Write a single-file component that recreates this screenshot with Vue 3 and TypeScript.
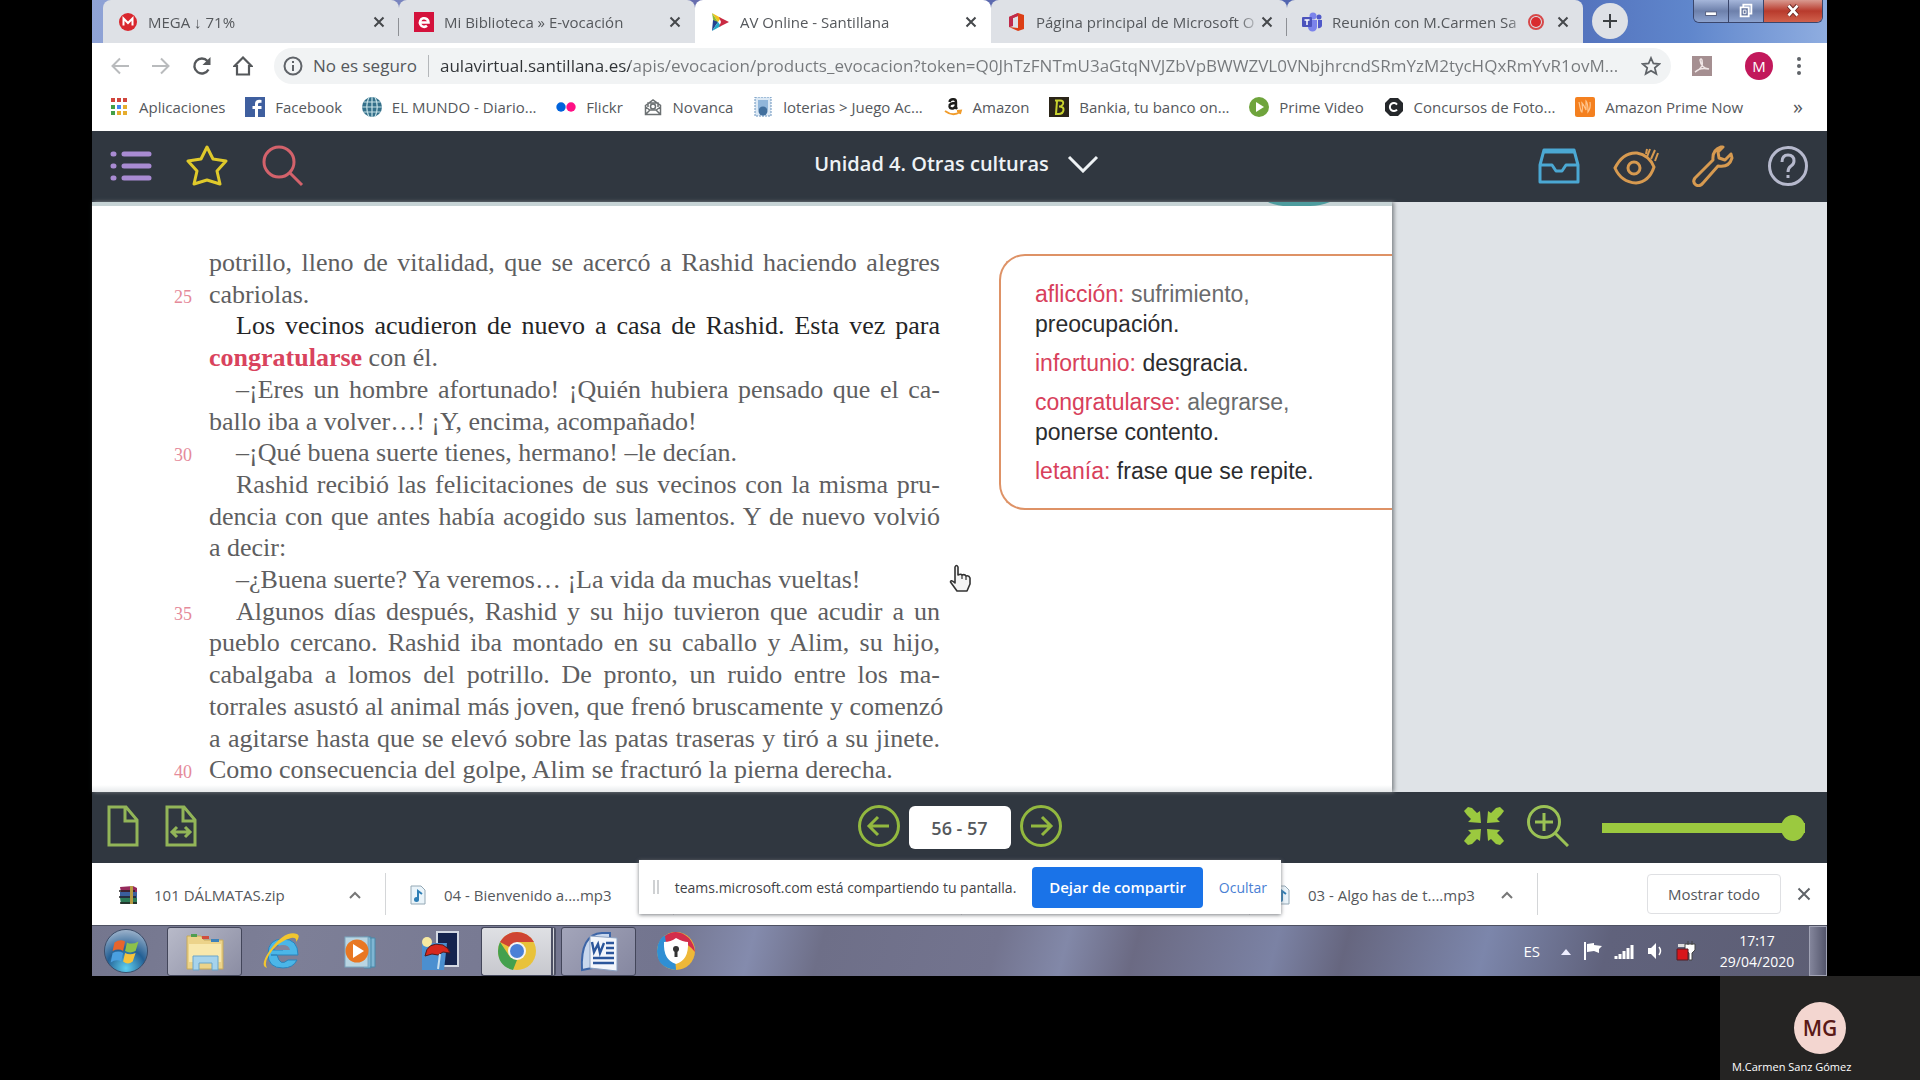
<script setup lang="ts">
import { ref } from 'vue'

interface IconItem {
  label: string
  icon: string
}
interface Tab extends IconItem {
  active?: boolean
  recording?: boolean
  divider?: boolean
}
interface Line {
  text: string
  keyword?: string
  num?: number
  indent?: boolean
  full?: boolean
  strong?: boolean
}

const tabs: Tab[] = [
  { label: 'MEGA ↓ 71%', divider: true, icon: '<circle cx="10" cy="10" r="9" fill="#d9272e"/><path d="M5.500 13.500v-7l4.500 4.500 4.500-4.500v7" fill="none" stroke="#fff" stroke-width="2"/>' },
  { label: 'Mi Biblioteca » E-vocación', icon: '<rect width="20" height="20" fill="#d4123c"/><path d="M6 10.500h8.500a4.300 4.300 0 1 0-1.500 3.300" fill="none" stroke="#fff" stroke-width="2.600"/>' },
  { label: 'AV Online - Santillana', active: true, icon: '<path d="M2 1l9 5-3 4z" fill="#f2c21a"/><path d="M2 1l6 9-4 3z" fill="#8dbb3a"/><path d="M2 19l6-9-5-2z" fill="#23408f"/><path d="M2 19l9-5-3-4z" fill="#25a7c9"/><path d="M9 5l10 5-10 5 2-5z" fill="#c92a43"/>' },
  { label: 'Página principal de Microsoft O', divider: true, icon: '<path d="M3 5l9-4 6 2v14l-6 2-9-4 9 1V4L7 6v8l-4 1z" fill="#dc3e15"/><path d="M3 5l9-4v3L7 6v8l-4 1z" fill="#c02b4c"/>' },
  { label: 'Reunión con M.Carmen Sa', recording: true, icon: '<circle cx="11" cy="4" r="3.500" fill="#7b83eb"/><circle cx="17" cy="5" r="2.500" fill="#5059c9"/><path d="M6 8h9v7a4.500 4.500 0 0 1-9 0z" fill="#7b83eb"/><path d="M16 8h4v5a3 3 0 0 1-4 3z" fill="#5059c9"/><rect y="5" width="10" height="10" rx="1" fill="#4b53bc"/><path d="M2.500 8h5M5 8v5" stroke="#fff" stroke-width="1.500"/>' },
]

const bookmarks: IconItem[] = [
  { label: 'Aplicaciones', icon: '<g fill="#d0453c"><path d="M2 1h4v4H2zM8 1h4v4H8zM14 1h4v4h-4z"/></g><path d="M2 8h4v4H2zM2 14h4v4H2z" fill="#43a047"/><path d="M8 8h4v4H8z" fill="#4285f4"/><path d="M14 8h4v4h-4zM8 14h4v4H8zM14 14h4v4h-4z" fill="#e6ad2e"/>' },
  { label: 'Facebook', icon: '<rect width="20" height="20" fill="#3f5f9f"/><path d="M13 20v-8h3.500V9H13V7q0-1.500 3.500-1.200V3Q10 2 10 7v2H7.500v3H10v8z" fill="#fff"/>' },
  { label: 'EL MUNDO - Diario...', icon: '<circle cx="10" cy="10" r="10" fill="#34708a"/><path d="M0 10h20M1.500 5h17M1.500 15h17M10 0v20M7 0Q2.500 10 7 20M13 0q4.500 10 0 20" fill="none" stroke="#c4e0e6" stroke-width="1.200"/>' },
  { label: 'Flickr', icon: '<circle cx="5" cy="10" r="4.700" fill="#0063dc"/><circle cx="15" cy="10" r="4.700" fill="#ff0f84"/>' },
  { label: 'Novanca', icon: '<g fill="none" stroke="#6b7072" stroke-width="1.500"><path d="M2.500 8.500L10 3l7.500 5.500v9h-15zM5 10V6h10v4M2.500 10l5 3.500M17.500 10l-5 3.500M3 17l4-4h6l4 4"/><circle cx="10" cy="9.500" r="2.500"/></g>' },
  { label: 'loterias > Juego Ac...', icon: '<path d="M2 0h16v19H2z" fill="#dbe8f4" stroke="#6b93bd" stroke-dasharray="2 1"/><path d="M5 3h10v9l-5 8-5-8z" fill="#91b6da"/><circle cx="10" cy="14" r="4.500" fill="#416f9d"/>' },
  { label: 'Amazon', icon: '<path d="M6.500 5Q7 2 10.500 2.300 13 2.500 13 5v5.500l1 1.500M13 6Q6 6 6.500 9.500 7 12 10 11.500 13 11 13 7" fill="none" stroke="#1d1d1b" stroke-width="2.400"/><path d="M2 14q8 6 15 1M14 14l4-.5-1 3.500" fill="none" stroke="#f19c2b" stroke-width="1.800"/>' },
  { label: 'Bankia, tu banco on...', icon: '<rect width="20" height="20" fill="#2b2519"/><path d="M6 3.500h5q4 0 3 3.500-1 2.500-4 2.500 5 0 4.500 3.500-.5 4-5 4H7l1-13" fill="none" stroke="#c9d32e" stroke-width="2"/>' },
  { label: 'Prime Video', icon: '<circle cx="10" cy="10" r="10" fill="#6fa43c"/><path d="M7 5l8 5-8 5z" fill="#fff"/>' },
  { label: 'Concursos de Foto...', icon: '<path d="M6 1h8l5 5v8l-5 5H6l-5-5V6z" fill="#25282b"/><path d="M13 7.500a4 4 0 1 0 0 5" fill="none" stroke="#fff" stroke-width="2"/>' },
  { label: 'Amazon Prime Now', icon: '<rect width="20" height="20" rx="2" fill="#f4801f"/><path d="M4 5q2 11 3 10 1-4 0-9 2 2 4 7V4q2 2 2 11 3-4 2-10" fill="none" stroke="#ffc48c" stroke-width="1.200"/>' },
]

const lines: Line[] = [
  { text: 'potrillo, lleno de vitalidad, que se acercó a Rashid haciendo alegres', full: true },
  { text: 'cabriolas.', num: 25 },
  { text: 'Los vecinos acudieron de nuevo a casa de Rashid. Esta vez para', indent: true, full: true, strong: true },
  { keyword: 'congratularse', text: ' con él.' },
  { text: '–¡Eres un hombre afortunado! ¡Quién hubiera pensado que el ca-', indent: true, full: true },
  { text: 'ballo iba a volver…! ¡Y, encima, acompañado!' },
  { text: '–¡Qué buena suerte tienes, hermano! –le decían.', num: 30, indent: true },
  { text: 'Rashid recibió las felicitaciones de sus vecinos con la misma pru-', indent: true, full: true },
  { text: 'dencia con que antes había acogido sus lamentos. Y de nuevo volvió', full: true },
  { text: 'a decir:' },
  { text: '–¿Buena suerte? Ya veremos… ¡La vida da muchas vueltas!', indent: true },
  { text: 'Algunos días después, Rashid y su hijo tuvieron que acudir a un', num: 35, indent: true, full: true },
  { text: 'pueblo cercano. Rashid iba montado en su caballo y Alim, su hijo,', full: true },
  { text: 'cabalgaba a lomos del potrillo. De pronto, un ruido entre los ma-', full: true },
  { text: 'torrales asustó al animal más joven, que frenó bruscamente y comenzó', full: true },
  { text: 'a agitarse hasta que se elevó sobre las patas traseras y tiró a su jinete.', full: true },
  { text: 'Como consecuencia del golpe, Alim se fracturó la pierna derecha.', num: 40 },
]

const glossary = [
  { term: 'aflicción:', first: 'sufrimiento,', rest: 'preocupación.' },
  { term: 'infortunio:', first: '', rest: 'desgracia.' },
  { term: 'congratularse:', first: 'alegrarse,', rest: 'ponerse contento.' },
  { term: 'letanía:', first: '', rest: 'frase que se repite.' },
]

const url = ref('aulavirtual.santillana.es/apis/evocacion/products_evocacion?token=Q0JhTzFNTmU3aGtqNVJZbVpBWWZVL0VNbjhrcndSRmYzM2tycHQxRmYvR1ovM...')
const pages = ref('56 - 57')
const zoomLevel = ref(100)
</script>

<template>
  <div class="stage">
    <main class="screen">
      <div class="tabstrip">
        <div v-for="t in tabs" :key="t.label" class="tab" :class="{ active: t.active, divider: t.divider }">
          <svg class="ico20" viewBox="0 0 20 20" v-html="t.icon"></svg>
          <span class="tab-title">{{ t.label }}</span>
          <svg v-if="t.recording" class="rec" viewBox="0 0 18 18"><circle cx="9" cy="9" r="7" fill="none" stroke="#d7494a" stroke-width="2" /><circle cx="9" cy="9" r="5" fill="#d92b2f" /></svg>
          <button class="plain" aria-label="Cerrar pestaña"><svg class="ico12" viewBox="0 0 12 12"><path d="M1.500 1.500l9 9M10.500 1.500l-9 9" stroke="#45484b" stroke-width="2" /></svg></button>
        </div>
        <button class="newtab" aria-label="Nueva pestaña"><svg viewBox="0 0 16 16"><path d="M8 1v14M1 8h14" stroke="#3c4043" stroke-width="2" /></svg></button>
        <div class="winbtns">
          <button class="win" aria-label="Minimizar"><svg viewBox="0 0 20 20"><rect x="4" y="11" width="12" height="4" fill="#fff" stroke="#50597a" /></svg></button>
          <button class="win" aria-label="Restaurar"><svg viewBox="0 0 20 20"><path d="M7 3h9v10h-9z" fill="#8a9cc4" stroke="#fff" stroke-width="2" /><path d="M4 6h9v10H4z" fill="#66769e" stroke="#fff" stroke-width="2" /><path d="M7 9h3v4H7z" fill="none" stroke="#fff" /></svg></button>
          <button class="win close" aria-label="Cerrar"><svg viewBox="0 0 20 20"><path d="M5 4l10 11M15 4L5 15" stroke="#6b2a26" stroke-width="5" /><path d="M5 4l10 11M15 4L5 15" stroke="#fff" stroke-width="3" /></svg></button>
        </div>
      </div>

      <div class="toolbar">
        <button class="plain" aria-label="Atrás"><svg class="ico20" viewBox="0 0 20 20"><path d="M19 10H3M10 2.500L2.500 10l7.500 7.500" fill="none" stroke="#b9bbbd" stroke-width="2" /></svg></button>
        <button class="plain" aria-label="Adelante"><svg class="ico20" viewBox="0 0 20 20"><path d="M1 10h16M10 2.500l7.500 7.500-7.500 7.500" fill="none" stroke="#b9bbbd" stroke-width="2" /></svg></button>
        <button class="plain" aria-label="Recargar"><svg class="ico20" viewBox="0 0 20 20"><path d="M16.500 13.500A7.500 7.500 0 1 1 15.500 5" fill="none" stroke="#55585b" stroke-width="2.400" /><path d="M18.500 1v8h-8z" fill="#55585b" /></svg></button>
        <button class="plain" aria-label="Inicio"><svg class="ico20" viewBox="0 0 20 20"><path d="M10 1.500L1.500 10H4v8.500h12V10h2.500z" fill="none" stroke="#55585b" stroke-width="2.200" /></svg></button>
        <div class="omnibox">
          <svg class="ico20" viewBox="0 0 20 20"><circle cx="10" cy="10" r="8.500" fill="none" stroke="#5f6368" stroke-width="2" /><path d="M10 9v6M10 5v2" stroke="#5f6368" stroke-width="2" /></svg>
          <span class="insecure">No es seguro</span>
          <input v-model="url" class="url" type="text" aria-label="Dirección" spellcheck="false" />
          <button class="plain" aria-label="Añadir a marcadores"><svg class="ico20" viewBox="0 0 20 20"><path d="M10 2l2.400 5.500 6 .5-4.600 3.900 1.500 5.900L10 14.700l-5.300 3.100 1.500-5.900L1.600 8l6-.5z" fill="none" stroke="#5f6368" stroke-width="1.800" /></svg></button>
        </div>
        <svg class="ico20" viewBox="0 0 20 20"><rect width="20" height="20" fill="#a58f91" /><path d="M3 16Q12 12 10 4q-1-2-2 0 1 8 9 9M3 16q5-5 14-3" fill="none" stroke="#f0e6e6" stroke-width="1.500" /></svg>
        <span class="avatar">M</span>
        <button class="plain" aria-label="Menú"><svg class="dots" viewBox="0 0 6 20"><g fill="#5f6368"><circle cx="3" cy="3" r="2" /><circle cx="3" cy="10" r="2" /><circle cx="3" cy="17" r="2" /></g></svg></button>
      </div>

      <nav class="bookmarks">
        <a v-for="b in bookmarks" :key="b.label" href="#"><svg class="ico20" viewBox="0 0 20 20" v-html="b.icon"></svg>{{ b.label }}</a>
        <button class="plain more" aria-label="Más marcadores">»</button>
      </nav>

      <header class="book-head">
        <div class="group left">
          <button class="plain" aria-label="Índice"><svg class="ico42" viewBox="0 0 42 42"><g stroke="#a98bd3" stroke-width="5" stroke-linecap="round"><path d="M14 9h25M14 21h25M14 33h25M3 9h1M3 21h1M3 33h1" /></g></svg></button>
          <button class="plain" aria-label="Favoritos"><svg class="ico42" viewBox="0 0 42 42"><path d="M21 2l6 12 13 2-9 10 3 13-13-4-13 4 3-13L2 16l13-2z" fill="none" stroke="#dfc92b" stroke-width="3" stroke-linejoin="round" /></svg></button>
          <button class="plain" aria-label="Buscar"><svg class="ico42" viewBox="0 0 42 42"><circle cx="17" cy="17" r="15" fill="none" stroke="#d3626b" stroke-width="3" /><path d="M28 28l12 12" stroke="#d3626b" stroke-width="3" /></svg></button>
        </div>
        <button class="plain unit">Unidad 4. Otras culturas<svg viewBox="0 0 32 18"><path d="M2 2l14 14L30 2" fill="none" stroke="#eef2f5" stroke-width="3" /></svg></button>
        <div class="group right">
          <button class="plain" aria-label="Recursos"><svg class="ico42" viewBox="0 0 42 42"><g fill="none" stroke="#4ba8d3" stroke-width="3" stroke-linejoin="round"><path d="M2 20L6 5h30l4 15v17H2zM2 20h12l4 6h6l4-6h12" /><path d="M5 7h32" /></g></svg></button>
          <button class="plain" aria-label="Ver"><svg class="ico46" viewBox="0 0 46 42"><g fill="none" stroke="#d79a50" stroke-width="3"><path d="M2 23Q10 7 24 8q12 2 17 14-5 15-18 16Q8 37 2 23z" /><circle cx="21" cy="23" r="6" /><path d="M34 12l3-8M38 14l4-9M42 16l3-8M33 9l1-5" stroke-width="2" /></g></svg></button>
          <button class="plain" aria-label="Herramientas"><svg class="ico42" viewBox="0 0 42 42"><path d="M29 2q-9 3-8 13L3 33q-3 4 1 7 4 2 7-2l15-17q11 2 14-8l-1-4-6 6-6-2-1-6 5-5z" fill="none" stroke="#d79a50" stroke-width="3" stroke-linejoin="round" /></svg></button>
          <button class="plain" aria-label="Ayuda"><svg class="ico42" viewBox="0 0 42 42"><circle cx="21" cy="21" r="18.500" fill="none" stroke="#b6b9cd" stroke-width="3" /><path d="M15 17q0-7 6-7t6 6q0 3-3 5-3 2-3 6M21 30v3" fill="none" stroke="#b6b9cd" stroke-width="3" /></svg></button>
        </div>
      </header>

      <section class="viewer">
        <div class="page">
          <svg class="teal" viewBox="0 0 62 4" preserveAspectRatio="none"><path d="M0 0h62Q52 4 42 4H20Q8 4 0 0z" fill="#4d9c9e" /></svg>
          <article class="story">
            <div v-for="(l, i) in lines" :key="i" class="row">
              <span class="num">{{ l.num }}</span>
              <p :class="{ indent: l.indent, full: l.full, strong: l.strong }"><b v-if="l.keyword">{{ l.keyword }}</b>{{ l.text }}</p>
            </div>
          </article>
          <aside class="glossary">
            <p v-for="g in glossary" :key="g.term">
              <span class="term">{{ g.term }}</span>&nbsp;<template v-if="g.first"><span class="soft">{{ g.first }}</span><br /></template>{{ g.rest }}
            </p>
          </aside>
        </div>
        <svg class="cursor" viewBox="0 0 22 28"><path d="M6 16V3q1.500-3 3 0v8q3-1.500 4 0 3-1 4 1 3-1 4 2v6l-3 7H8L1.500 18q0-3 4.500 1z" fill="#f4f4f4" stroke="#333" stroke-width="1.600" stroke-linejoin="round" /><path d="M13 11v4M17 12v4" stroke="#333" stroke-width="1.200" /></svg>
      </section>

      <footer class="book-foot">
        <div class="group files">
          <button class="plain" aria-label="Una página"><svg class="file" viewBox="0 0 32 42"><path d="M2 2h17l11 13v25H2zM18 2v14h12" fill="none" stroke="#92b558" stroke-width="3" /></svg></button>
          <button class="plain" aria-label="Ajustar al ancho"><svg class="file" viewBox="0 0 32 42"><path d="M2 2h17l11 13v25H2zM18 2v14h12M8 27h16M12 22l-5 5 5 5M20 22l5 5-5 5" fill="none" stroke="#92b558" stroke-width="3" /></svg></button>
        </div>
        <div class="group pager">
          <button class="plain" aria-label="Anterior"><svg class="ico42" viewBox="0 0 42 42"><g fill="none" stroke="#92b83f" stroke-width="3"><circle cx="21" cy="21" r="19.500" /><path d="M31 21H12M20 12l-9 9 9 9" /></g></svg></button>
          <input v-model="pages" type="text" class="pages" aria-label="Páginas" />
          <button class="plain" aria-label="Siguiente"><svg class="ico42" viewBox="0 0 42 42"><g fill="none" stroke="#92b83f" stroke-width="3"><circle cx="21" cy="21" r="19.500" /><path d="M11 21h19M22 12l9 9-9 9" /></g></svg></button>
        </div>
        <div class="group zoom">
          <button class="plain" aria-label="Ajustar"><svg class="ico42" viewBox="0 0 42 42"><g fill="#9bc93f"><path d="M1 6l4-4 4 1 5 5 3-2 1 12-13-1 3-3-4-4z" /><path d="M41 6l-4-4-4 1-5 5-3-2-1 12 13-1-3-3 4-4z" /><path d="M1 36l4 4 4-1 5-5 3 2 1-12-13 1 3 3-4 4z" /><path d="M41 36l-4 4-4-1-5-5-3 2-1-12 13 1-3 3 4 4z" /></g></svg></button>
          <button class="plain" aria-label="Ampliar"><svg class="ico42" viewBox="0 0 42 42"><g fill="none" stroke="#9bc255" stroke-width="3"><circle cx="17" cy="17" r="15.500" /><path d="M28 28l13 13M17 8v18M8 17h18" /></g></svg></button>
          <input v-model="zoomLevel" type="range" class="slider" min="0" max="100" aria-label="Zoom" />
        </div>
      </footer>

      <section class="shelf">
        <div class="dl">
          <svg class="ico20" viewBox="0 0 20 20"><path d="M2 2l13-1 4 2v4H3z" fill="#962a5c" /><path d="M2 7h17v6H2z" fill="#3a5f9c" /><path d="M2 13h17v6H3z" fill="#2c7a56" /><path d="M1 6h16M1 12h17M2 18h17" stroke="#202020" stroke-width="1.500" /><path d="M12 1h3v18h-3z" fill="#b79b43" /></svg>
          <span>101 DÁLMATAS.zip</span>
          <button class="plain" aria-label="Opciones"><svg class="ico12" viewBox="0 0 12 12"><path d="M1 9l5-5 5 5" fill="none" stroke="#777" stroke-width="2" /></svg></button>
        </div>
        <div class="dl">
          <svg class="ico20" viewBox="0 0 20 20"><path d="M3 1h10l4 4v14H3z" fill="#eaf4fa" stroke="#94a8b5" /><path d="M10 15V6l4 3" fill="none" stroke="#2e7eb5" stroke-width="2" /><circle cx="8.500" cy="14.500" r="2.500" fill="#2e7eb5" /></svg>
          <span>04 - Bienvenido a....mp3</span>
        </div>
        <div class="dl blank"></div>
        <div class="dl blank"></div>
        <div class="dl">
          <svg class="ico20" viewBox="0 0 20 20"><path d="M3 1h10l4 4v14H3z" fill="#eaf4fa" stroke="#94a8b5" /><path d="M10 15V6l4 3" fill="none" stroke="#2e7eb5" stroke-width="2" /><circle cx="8.500" cy="14.500" r="2.500" fill="#2e7eb5" /></svg>
          <span>03 - Algo has de t....mp3</span>
          <button class="plain" aria-label="Opciones"><svg class="ico12" viewBox="0 0 12 12"><path d="M1 9l5-5 5 5" fill="none" stroke="#777" stroke-width="2" /></svg></button>
        </div>
        <button class="showall">Mostrar todo</button>
        <button class="plain" aria-label="Cerrar descargas"><svg class="ico14" viewBox="0 0 14 14"><path d="M1.500 1.500l11 11M12.500 1.500l-11 11" stroke="#5f6368" stroke-width="2" /></svg></button>

        <div class="share">
          <span class="grip"></span>
          <span>teams.microsoft.com está compartiendo tu pantalla.</span>
          <button class="stop">Dejar de compartir</button>
          <a href="#">Ocultar</a>
        </div>
      </section>

      <div class="taskbar">
        <button class="plain task orb" aria-label="Inicio"><svg viewBox="0 0 48 48"><defs><radialGradient id="orb" cx=".5" cy=".9" r=".9"><stop offset="0" stop-color="#5fd0f0" /><stop offset=".5" stop-color="#235f94" /><stop offset="1" stop-color="#9fb4cc" /></radialGradient></defs><circle cx="24" cy="24" r="22.500" fill="url(#orb)" stroke="#3a4a66" /><path d="M12 15q6-4 11-1l-2 10q-5-3-11 0z" fill="#e8652c" /><path d="M25 15q5 3 12-1l-3 10q-6 3-11 0z" fill="#8dc14a" /><path d="M10 26q6-3 11 0l-2 9q-5-3-11 1z" fill="#4a9fe0" /><path d="M23 26q5 3 11 0l-3 9q-5 4-10 0z" fill="#f6c33b" /></svg></button>
        <button class="task framed" aria-label="Explorador"><svg viewBox="0 0 42 42"><path d="M3 6h14l3 4h19v29H3z" fill="#ecd38a" stroke="#c6a95b" /><path d="M5 14h32v18H5z" fill="#f8e8ad" /><path d="M7 4h6v3H7z" fill="#4f9d4f" /><path d="M18 6h7v3h-7z" fill="#d14d3c" /><path d="M27 9h8v3h-8z" fill="#3d81b9" /><path d="M9 40V26h25v14h-6v-7H15v7z" fill="#a6d3ec" stroke="#6ba5c9" /></svg></button>
        <button class="plain task" aria-label="Internet Explorer"><svg viewBox="0 0 42 42"><path d="M10 25h27q0-16-15-16T7 24q0 14 15 14 10 0 14-8h-9q-8 7-11-5zm0-5q6-9 12 0z" fill="#4bb6e8" stroke="#2a84bd" /><path d="M14 20q2-5 8-5t7 5z" fill="#83849c" /><path d="M6 38Q-2 36 9 20 24 0 36 4q4 2-1 8 1-5-5-4-13 3-22 17-5 8-2 13z" fill="#f2c62f" /></svg></button>
        <button class="plain task" aria-label="Reproductor"><svg viewBox="0 0 42 42"><path d="M30 8h5v29h-5M24 7h7v31h-7" fill="#7fb6d3" stroke="#4b89a9" /><rect x="5" y="7" width="23" height="30" fill="#b9d5e2" stroke="#7aa6bf" /><circle cx="17" cy="21" r="11.500" fill="#e87722" /><path d="M13 14l11 7-11 7z" fill="#fff" /></svg></button>
        <button class="plain task" aria-label="Fotos"><svg viewBox="0 0 42 42"><path d="M18 2h21v34H18z" fill="#15244f" stroke="#d4d9e4" stroke-width="2" /><path d="M3 13h25l-3 27H3z" fill="#4b8fd0" /><circle cx="8" cy="12" r="5" fill="#f7e9a0" /><path d="M6 26q2-15 18-11 6 3 7 8l-7-1-5 3-6-1z" fill="#d8281d" stroke="#551b1b" /><path d="M21 24l-2 15" stroke="#c9e0ee" stroke-width="2" /></svg></button>
        <button class="task framed bright" aria-label="Chrome"><svg viewBox="0 0 42 42"><circle cx="21" cy="21" r="19" fill="#e8c23a" /><path d="M21 21L4 12Q10 2 21 2t17 10H21z" fill="#cf4433" /><path d="M4 12l10 15 7 3-4 10Q2 36 2 21q0-5 2-9z" fill="#44a04e" /><circle cx="21" cy="21" r="9" fill="#f4f4f4" /><circle cx="21" cy="21" r="7" fill="#4a80d6" /></svg></button>
        <button class="task framed word" aria-label="Word"><svg viewBox="0 0 42 42"><path d="M4 40Q2 4 24 3h8v5L14 38z" fill="#c8d7ed" stroke="#3c65a7" stroke-width="2" /><path d="M12 6l27 2v33l-27-3z" fill="#f3f6fb" stroke="#8ba1c2" /><path d="M14 12l2 10 4-8 2 9 4-10M28 13h8M28 18h8M28 23h8M15 28h21M15 33h21" fill="none" stroke="#2b569b" stroke-width="2.400" /></svg></button>
        <button class="plain task" aria-label="Navegador seguro"><svg viewBox="0 0 42 42"><circle cx="21" cy="21" r="19" fill="#eeb838" /><path d="M21 40Q2 38 2 21 2 8 13 4l6 8z" fill="#2f8fd4" /><path d="M10 6q12-9 24 2 5 6 6 14-7-9-15-10L11 13z" fill="#d32d4b" /><path d="M21 8q7 4 12 4 1 18-12 22Q8 30 9 12q7 0 12-4z" fill="#fff" /><circle cx="21" cy="19" r="3" fill="#333" /><path d="M21 19v8" stroke="#333" stroke-width="3" /></svg></button>
        <div class="tray">
          <span>ES</span>
          <svg class="ico12" viewBox="0 0 12 12"><path d="M1 10l5-6 5 6z" fill="#eef" /></svg>
          <svg class="ico20" viewBox="0 0 20 20"><path d="M2 1v18" stroke="#fff" stroke-width="2" /><path d="M4 3l7-1v8l-7 1zM11 4l8 1-3 3v4l-5-2z" fill="#fff" /></svg>
          <svg class="ico20" viewBox="0 0 20 20"><path d="M2 18v-3M6 18v-5M10 18v-8M14 18V7M18 18V4" stroke="#fff" stroke-width="3" /></svg>
          <svg class="ico20" viewBox="0 0 20 20"><path d="M3 7h3l5-5v16l-5-5H3z" fill="#fff" /><path d="M14 6q3 4 0 8" fill="none" stroke="#fff" stroke-width="1.500" /></svg>
          <svg class="ico20" viewBox="0 0 20 20"><path d="M2 3h8v3H2z" fill="#ddd" /><path d="M9 3h10v6l-3 3v7h-3v-7l-4-3zM12 0v4M16 0v4" fill="#fff" stroke="#444" /><path d="M1 8h11v11H1z" fill="#d8161b" stroke="#541d24" /></svg>
          <time>17:17<br />29/04/2020</time>
        </div>
        <button class="desktop" aria-label="Mostrar escritorio"></button>
      </div>
    </main>

    <div class="call">
      <div class="person"><span class="initials">MG</span><span class="name">M.Carmen Sanz Gómez</span></div>
    </div>
  </div>
</template>

<style>
body {
  margin: 0;
  background: #000;
}
</style>

<style scoped>
* {
  box-sizing: border-box;
}
.stage {
  display: flex;
  flex-direction: column;
  min-height: 100vh;
  background: #000;
  font-family: "Open Sans", "Noto Sans", sans-serif;
  font-size: 15px;
  color: #55585c;
}
.screen {
  flex: 1;
  display: flex;
  flex-direction: column;
  margin: 0 93px 0 92px;
  background: #fff;
}
button, input {
  font: inherit;
  color: inherit;
  padding: 0;
  border: 0;
}
.plain {
  display: flex;
  align-items: center;
  justify-content: center;
  background: none;
}
svg {
  display: block;
  flex: none;
}
.ico12 { width: 12px; height: 12px; }
.ico14 { width: 14px; height: 14px; }
.ico20 { width: 20px; height: 20px; }
.ico42 { width: 42px; height: 42px; }
.ico46 { width: 46px; height: 42px; }
.group {
  display: flex;
  align-items: center;
}

.tabstrip {
  display: flex;
  height: 43px;
  padding-left: 11px;
  background: linear-gradient(90deg, #8fa3d6, #6a6fae 30%, #4a62b0 80%, #5f86cc 92%, #8fade0);
}
.tab {
  display: flex;
  align-items: center;
  flex: 0 1 296px;
  min-width: 0;
  padding: 0 14px 0 15px;
  border-radius: 8px 8px 0 0;
  background: #dee1e6;
}
.tab.divider {
  background: linear-gradient(#8d9095, #8d9095) right 18px / 1px 18px no-repeat, #dee1e6;
}
.tab.active {
  background: #fff;
}
.tab-title {
  flex: 1;
  margin: 0 0 0 10px;
  overflow: hidden;
  white-space: nowrap;
  mask-image: linear-gradient(90deg, #000 90%, transparent);
}
.rec {
  width: 18px;
  height: 18px;
  margin-right: 12px;
}
.newtab {
  display: flex;
  align-items: center;
  justify-content: center;
  width: 36px;
  height: 36px;
  margin: 3px 0 0 9px;
  border-radius: 50%;
  background: #dee1e6;
}
.newtab svg { width: 16px; height: 16px; }
.winbtns {
  display: flex;
  height: 23px;
  margin: 0 4px 0 auto;
  border: 1px solid #3a466c;
  border-top: 0;
  border-radius: 0 0 6px 6px;
  overflow: hidden;
}
.win {
  display: flex;
  align-items: center;
  justify-content: center;
  width: 35px;
  border-right: 1px solid #3a466c;
  background: linear-gradient(#a5b6da, #6d80ab 50%, #8da3cf);
}
.win.close {
  width: 58px;
  border: 0;
  background: linear-gradient(#d99a90, #b83a2c 50%, #d0614c);
}
.win svg { width: 18px; height: 18px; }

.toolbar {
  display: flex;
  align-items: center;
  height: 45px;
  padding: 0 25px 0 18px;
  gap: 21px;
}
.omnibox {
  flex: 1;
  display: flex;
  align-items: center;
  height: 36px;
  padding: 0 10px 0 9px;
  border-radius: 18px;
  background: #f1f3f4;
  font-size: 17px;
}
.insecure {
  margin-left: 10px;
  padding-right: 11px;
  border-right: 1px solid #b4b7ba;
  line-height: 22px;
  white-space: nowrap;
}
.url {
  flex: 1;
  min-width: 0;
  margin: 0 12px 0 11px;
  background: linear-gradient(90deg, #303336 190px, #75787b 190px);
  background-clip: text;
  -webkit-text-fill-color: transparent;
}
.avatar {
  width: 28px;
  height: 28px;
  margin: 0 2px 0 12px;
  border-radius: 50%;
  background: #c2185b;
  color: #fff;
  line-height: 28px;
  text-align: center;
}
.dots { width: 6px; height: 20px; }

.bookmarks {
  display: flex;
  align-items: center;
  justify-content: space-between;
  height: 43px;
  padding: 0 24px 6px 17px;
}
.bookmarks a {
  display: flex;
  align-items: center;
  gap: 10px;
  color: inherit;
  text-decoration: none;
  white-space: nowrap;
}
.more {
  width: 40px;
  justify-content: flex-end;
  font-size: 20px;
}

.book-head {
  display: grid;
  grid-template-columns: 1fr auto 1fr;
  align-items: center;
  height: 71px;
  padding: 0 18px 2px;
  background: #303740;
}
.left { gap: 34px; }
.right { gap: 33px; justify-content: flex-end; }
.unit {
  gap: 18px;
  padding: 0 6px 4px 0;
  color: #eef2f5;
  font-size: 20px;
  font-weight: 600;
}
.unit svg { width: 32px; height: 18px; }

.viewer {
  position: relative;
  flex: 1;
  display: flex;
  background: #dfe3e7;
}
.page {
  position: relative;
  display: flex;
  align-items: flex-start;
  flex: 0 1 1300px;
  border-top: 4px solid #c6d3d5;
  background: linear-gradient(0deg, #e6e9eb, #fff 7px);
  box-shadow: 2px 0 4px #7e8488;
}
.teal {
  position: absolute;
  top: -4px;
  right: 62px;
  width: 62px;
  height: 4px;
}
.story {
  display: grid;
  grid-auto-rows: 1fr;
  flex: 0 1 848px;
  height: 539px;
  margin-top: 41px;
  font-family: "Liberation Serif", serif;
  font-size: 26px;
  color: #5e5e60;
}
.row {
  display: grid;
  grid-template-columns: 100px 731px;
  column-gap: 17px;
  align-items: baseline;
}
.num {
  font-size: 18px;
  color: #e58a9a;
  text-align: right;
}
p {
  margin: 0;
  line-height: 31px;
  white-space: nowrap;
}
.indent { padding-left: 27px; }
.full { text-align-last: justify; }
.strong { color: #242426; }
.row b { color: #d9435d; }
.glossary {
  flex: 1;
  display: flex;
  flex-direction: column;
  gap: 9px;
  margin: 48px 0 0 59px;
  padding: 23px 0 22px 34px;
  border: 2px solid #de9266;
  border-right: 0;
  border-radius: 26px 0 0 26px;
  font-family: "Liberation Sans", sans-serif;
  font-size: 23px;
  color: #2b2c2e;
}
.glossary p { line-height: 30px; }
.term { color: #d8405b; }
.soft { color: #6a6b6d; }
.cursor {
  position: absolute;
  left: 857px;
  top: 362px;
  width: 22px;
  height: 28px;
}

.book-foot {
  display: grid;
  grid-template-columns: 1fr auto 1fr;
  align-items: center;
  height: 71px;
  padding: 0 22px 4px 15px;
  background: #303740;
}
.files { gap: 26px; }
.file { width: 32px; height: 42px; }
.pager { gap: 9px; padding-left: 7px; }
.pages {
  width: 102px;
  height: 43px;
  margin-top: 4px;
  border-radius: 6px;
  background: #fff;
  text-align: center;
  font-size: 18px;
  font-weight: 600;
}
.zoom { gap: 22px; justify-content: flex-end; }
.slider {
  appearance: none;
  width: 203px;
  height: 26px;
  margin: 4px 0 0 11px;
  background: linear-gradient(#9bc93f, #9bc93f) center / 100% 10px no-repeat;
  border-radius: 5px;
}
.slider::-webkit-slider-thumb {
  appearance: none;
  width: 24px;
  height: 26px;
  border-radius: 50%;
  background: #9bc93f;
}

.shelf {
  position: relative;
  display: flex;
  align-items: center;
  height: 62px;
  padding-right: 16px;
}
.dl {
  display: flex;
  align-items: center;
  flex: 0 1 288px;
  min-width: 0;
  height: 42px;
  padding: 2px 24px 0 22px;
  gap: 16px;
  border-right: 1px solid #d4d6d8;
  white-space: nowrap;
}
.dl:first-child {
  flex-basis: 294px;
  padding-left: 26px;
}
.dl button { margin-left: auto; }
.showall {
  width: 134px;
  height: 40px;
  margin: 0 16px 0 auto;
  border: 1px solid #dfe0e3;
  border-radius: 4px;
  background: #fff;
}
.share {
  position: absolute;
  left: 547px;
  top: -3px;
  display: flex;
  align-items: center;
  justify-content: space-between;
  width: 642px;
  height: 54px;
  padding: 0 14px;
  background: #fff;
  box-shadow: 0 1px 4px #7c7f84;
  color: #3f4246;
  font-size: 14px;
  white-space: nowrap;
}
.grip {
  width: 6px;
  height: 14px;
  border: 2px solid #cfd1d3;
  border-width: 0 2px;
}
.stop {
  width: 171px;
  height: 41px;
  border-radius: 4px;
  background: #1a73e8;
  color: #fff;
  font-size: 15px;
  font-weight: 600;
}
.share a {
  color: #4a7fd4;
  text-decoration: none;
}

.taskbar {
  display: flex;
  align-items: center;
  height: 51px;
  border-top: 1px solid #4e5162;
  background: linear-gradient(105deg, #74768e, #7d7f97 12%, #73758f 33%, #848bad 38%, #6e6f88 42%, #73748f 52%, #8288a8 56%, #6b6a83 60%, #7b82a4 68%, #66667f 72%, #7c86ab 80%, #60627c 87%, #5d5e74);
}
.task {
  display: flex;
  align-items: center;
  justify-content: center;
  width: 79px;
  height: 49px;
}
.task svg { width: 42px; height: 42px; }
.task.orb { width: 68px; margin-right: 7px; }
.task.orb svg { width: 46px; height: 46px; }
.framed {
  width: 75px;
  border: 1px solid #43465a;
  border-radius: 3px;
  background: linear-gradient(135deg, #b8bac9, #8b8da3);
}
.framed.bright {
  margin: 0 5px 0 2px;
  border-right: 5px double #4d5064;
  background: linear-gradient(#dfe0e4, #c7c8ce);
}
.framed.word { background: linear-gradient(135deg, #a3a5ba, #8587a0); }
.tray {
  display: flex;
  align-items: center;
  gap: 11px;
  margin-left: auto;
  color: #fff;
}
.tray span { margin-right: 9px; }
.tray time {
  width: 96px;
  margin-left: 2px;
  font-size: 14px;
  line-height: 21px;
  text-align: center;
}
.desktop {
  width: 18px;
  height: 50px;
  margin-left: 4px;
  border: 1px solid #a1a3b5;
  background: linear-gradient(90deg, #83859b, #54566c);
}

.call {
  display: flex;
  justify-content: flex-end;
}
.person {
  display: grid;
  width: 200px;
  height: 104px;
  padding-top: 26px;
  background: #252423;
}
.initials {
  justify-self: center;
  width: 52px;
  height: 52px;
  border-radius: 50%;
  background: #f3d6d0;
  color: #5a1a17;
  font-size: 21px;
  font-weight: 600;
  line-height: 52px;
  text-align: center;
}
.name {
  padding-left: 12px;
  color: #fff;
  font-size: 11px;
  line-height: 26px;
}
</style>
